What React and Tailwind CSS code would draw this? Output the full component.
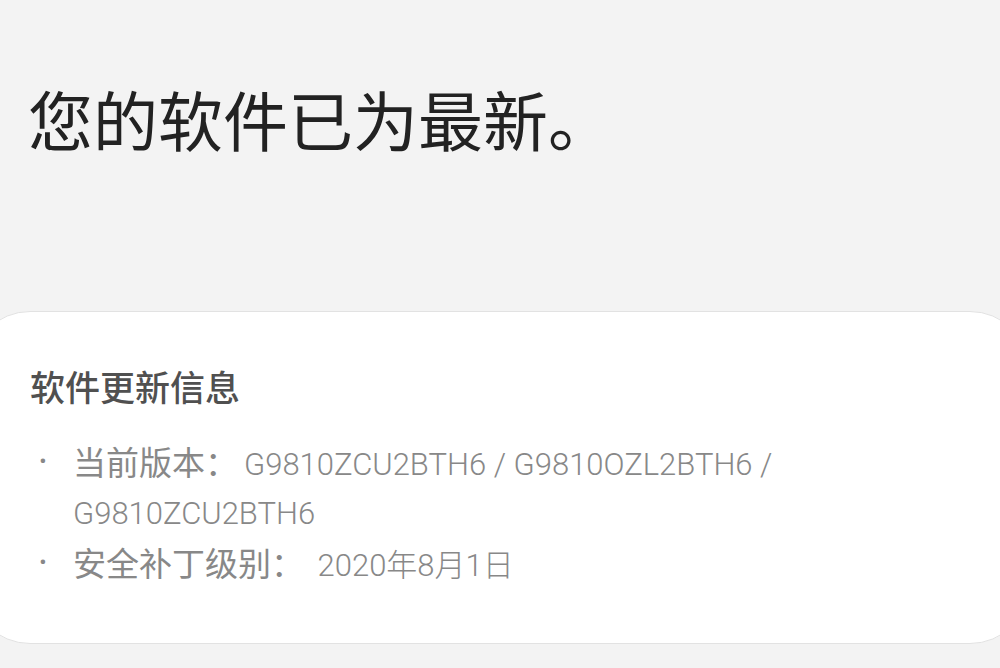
import React from "react";

const cjk = "font-['Noto_Sans_CJK_SC',sans-serif]";
const mixed = "font-['Roboto','Noto_Sans_CJK_SC',sans-serif]";

const items = [
  { label: "当前版本：", value: "G9810ZCU2BTH6 / G9810OZL2BTH6 / G9810ZCU2BTH6" },
  { label: "安全补丁级别：", value: " 2020年8月1日" },
];

export default function App() {
  return (
    <div className="min-h-screen overflow-hidden bg-[#f3f3f3]">
      {/* Heading */}
      <h1 className={`${cjk} pl-[28px] pt-[86px] text-[65px] leading-[65px] font-normal text-[#222]`}>
        您的软件已为最新。
      </h1>

      {/* Info card */}
      <div className="mt-[160px] -mx-[30px] rounded-[60px] border border-[#e2e2e2] bg-white pl-[59px] pr-[70px] pt-[54px] pb-[53px]">
        <h2 className={`${cjk} text-[35px] leading-[40px] font-medium text-[#505050]`}>
          软件更新信息
        </h2>
        <ul className="mt-[31px]">
          {items.map((it) => (
            <li key={it.label} className={`${mixed} flex text-[31px] leading-[49px] font-light text-[#888]`}>
              <span className="w-[43px] shrink-0 pl-[9px] text-[24px]">•</span>
              <span className="whitespace-pre-wrap">
                <span className={`${cjk} mr-[6px] text-[33px] leading-[49px] font-normal`}>{it.label}</span>
                {it.value}
              </span>
            </li>
          ))}
        </ul>
      </div>
    </div>
  );
}
